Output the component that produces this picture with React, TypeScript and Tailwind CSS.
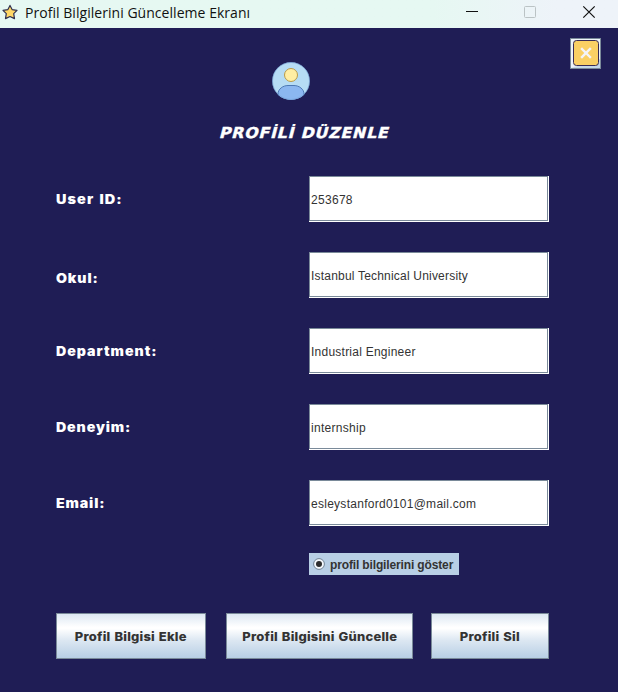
import React from "react";

const FIELDS = [
  { label: "User ID:", value: "253678", labelClass: "scale-x-[1.11] tracking-[1px] [word-spacing:1px]", valueClass: "tracking-[0.3px]" },
  { label: "Okul:", value: "Istanbul Technical University", labelClass: "scale-x-[1.09] tracking-[0.8px] pt-[5px]", valueClass: "tracking-[0.2px]" },
  { label: "Department:", value: "Industrial Engineer", labelClass: "scale-x-[1.09] tracking-[0.9px]", valueClass: "tracking-[0.24px]" },
  { label: "Deneyim:", value: "internship", labelClass: "scale-x-[1.09] tracking-[0.8px]", valueClass: "tracking-[0.3px]" },
  { label: "Email:", value: "esleystanford0101@mail.com", labelClass: "scale-x-[1.09] tracking-[0.8px]", valueClass: "tracking-[0.27px]" },
];

function TitleBar() {
  return (
    <header className="flex h-7 items-center bg-gradient-to-r from-[#e6f8f2] from-70% to-[#eef3f9] to-90% pl-[2px]">
      <svg width="17" height="17" viewBox="0 0 17 17" className="-mt-[3px] shrink-0">
        <path
          d="M8 1.4 L10.1 5.6 L15 6.3 L11.7 9.6 L12.5 14.6 L8 12.5 L3.5 14.6 L4.3 9.6 L1 6.3 L5.9 5.6 Z"
          fill="#ffd766"
          stroke="#30304f"
          strokeWidth="1.2"
          strokeLinejoin="round"
        />
      </svg>
      <h1 className="-mt-[2px] ml-[6px] whitespace-nowrap font-['Open_Sans','Noto_Sans',sans-serif] text-[14px] leading-5 tracking-[0.04px] text-[#111]">
        Profil Bilgilerini Güncelleme Ekranı
      </h1>
      <div className="-mt-[4px] ml-auto flex items-center pr-[22px]">
        <svg width="130" height="14" viewBox="0 0 130 14" fill="none">
          <path d="M0 6.5h12" stroke="#111" />
          <rect x="58.5" y="1.5" width="11" height="11" rx="1" stroke="#bbc3c5" />
          <path d="M117.3 1.3l11.4 11.4M128.7 1.3l-11.4 11.4" stroke="#111" strokeWidth="1.2" />
        </svg>
      </div>
    </header>
  );
}

function Avatar() {
  return (
    <svg width="38" height="38" viewBox="0 0 38 38">
      <defs>
        <clipPath id="face">
          <circle cx="19" cy="19" r="19" />
        </clipPath>
      </defs>
      <circle cx="19" cy="19" r="18.7" fill="#b6dcf4" />
      <g clipPath="url(#face)">
        <path d="M6 35v-3c0-5 5-8.500 10-8.500h6c5 0 10 3.500 10 8.500v3C25 40 13 40 6 35z" fill="#8bb7f0" stroke="#4e7ab5" />
      </g>
      <circle cx="19" cy="13" r="6.5" fill="#ffeea3" stroke="#ba9b48" />
      <circle cx="19" cy="19" r="18.500" fill="none" stroke="#6d9bd0" strokeWidth=".6" />
    </svg>
  );
}

function ActionButton({ className, children }: { className: string; children: React.ReactNode }) {
  return (
    <button
      className={`flex h-[46px] items-center justify-center whitespace-nowrap border border-[#7a8a99] bg-[linear-gradient(#dde8f3_0%,#ffffff_30%,#ffffff_33%,#dce7f2_60%,#b8cfe5_100%)] pt-px font-['Inter','Liberation_Sans',sans-serif] text-[12px] font-extrabold leading-4 tracking-[0.2px] text-[#333] ${className}`}
    >
      <span className="inline-block scale-x-[1.08] [word-spacing:0.8px]">{children}</span>
    </button>
  );
}

export default function App() {
  return (
    <div className="flex h-[692px] w-[618px] flex-col overflow-hidden bg-[#1f1d55]">
      <TitleBar />
      <main className="flex flex-1 flex-col">
        <div className="flex h-[72px] items-start justify-between pl-[272px] pr-[17px] pt-[10px]">
          <div className="pt-6">
            <Avatar />
          </div>
          <button className="flex h-[31px] w-[31px] items-center justify-center border border-[#7a8a99] bg-[#eef4fa]">
            <svg width="29" height="29" viewBox="0 0 29 29">
              <path d="M0 29L29 29V20z" fill="#c5d8ea" />
              <rect x="2.500" y="1.500" width="25" height="25" rx="3" fill="#fad064" stroke="#392c55" />
              <path d="M11 10l8 8M19 10l-8 8" stroke="#f4f4fa" strokeWidth="2.400" strokeLinecap="square" />
            </svg>
          </button>
        </div>
        <h2 className="mt-[23px] h-5 whitespace-nowrap pl-[220px] font-['DejaVu_Sans',sans-serif] text-[15px] font-bold leading-5 tracking-[0.7px] text-white">
          <span className="inline-block origin-left -skew-x-[14deg] scale-x-[1.06] [-webkit-text-stroke:0.4px_white]">PROFİLİ DÜZENLE</span>
        </h2>
        <div className="ml-[56px] mt-[33px] flex w-[493px] flex-col gap-[30px]">
          {FIELDS.map((f) => (
            <div key={f.label} className="flex h-[46px] items-center justify-between">
              <label className={`origin-left whitespace-nowrap font-['Inter','Liberation_Sans',sans-serif] text-[13px] font-black leading-4 text-white ${f.labelClass}`}>
                {f.label}
              </label>
              <div className="h-[46px] w-[240px] border-b border-r border-white bg-white">
                <div className="flex h-full items-center border border-[#7a8a99] pl-[1px] font-['Liberation_Sans',Arial,sans-serif] text-[12px] leading-4 text-[#333]">
                  <span className={`whitespace-nowrap pt-[2px] ${f.valueClass}`}>{f.value}</span>
                </div>
              </div>
            </div>
          ))}
        </div>
        <label className="ml-[309px] mt-[27px] flex h-[22px] w-[150px] items-center bg-[#b8cfe5] pl-1">
          <svg width="12" height="12" viewBox="0 0 12 12" className="shrink-0">
            <circle cx="6" cy="6" r="5.400" fill="#f4f8fc" stroke="#718395" />
            <circle cx="6" cy="6" r="3" fill="#2d2d2d" />
          </svg>
          <span className="ml-[5px] whitespace-nowrap pt-px font-['Liberation_Sans',Arial,sans-serif] text-[12px] font-bold leading-4 tracking-[-0.14px] text-[#333]">
            profil bilgilerini göster
          </span>
        </label>
        <div className="ml-[56px] mt-[38px] flex w-[493px]">
          <ActionButton className="w-[150px]">Profil Bilgisi Ekle</ActionButton>
          <ActionButton className="ml-5 w-[187px]">Profil Bilgisini Güncelle</ActionButton>
          <ActionButton className="ml-[18px] w-[118px]">Profili Sil</ActionButton>
        </div>
      </main>
    </div>
  );
}
